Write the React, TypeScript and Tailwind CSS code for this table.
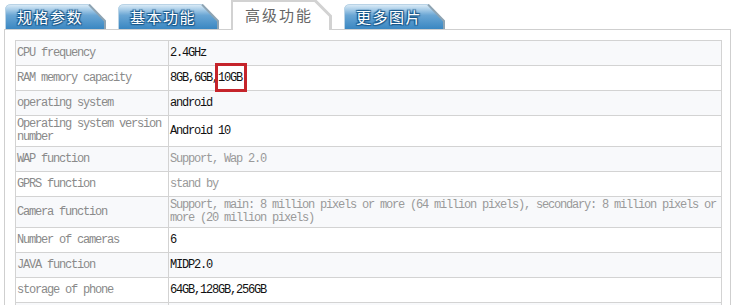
import React from "react";

type Row = {
  label: string;
  value: React.ReactNode;
  muted?: boolean;
};

const rows: Row[] = [
  { label: "CPU frequency", value: "2.4GHz" },
  {
    label: "RAM memory capacity",
    value: (
      <>
        8GB,6GB,
        <span className="relative">
          10GB
          <span className="absolute -top-[8px] -bottom-[7px] -left-[3px] -right-[5px] border-[3px] border-[#c5242b]" />
        </span>
      </>
    ),
  },
  { label: "operating system", value: "android" },
  { label: "Operating system version number", value: "Android 10" },
  { label: "WAP function", value: "Support, Wap 2.0", muted: true },
  { label: "GPRS function", value: "stand by", muted: true },
  {
    label: "Camera function",
    value:
      "Support, main: 8 million pixels or more (64 million pixels), secondary: 8 million pixels or more (20 million pixels)",
    muted: true,
  },
  { label: "Number of cameras", value: "6" },
  { label: "JAVA function", value: "MIDP2.0" },
  { label: "storage of phone", value: "64GB,128GB,256GB" },
  { label: "", value: "" },
];

const BlueTab: React.FC<{ label: string }> = ({ label }) => (
  <div className="relative w-[101px] h-[25px] mb-px flex items-center pl-[12px]">
    <svg className="absolute inset-0" width="101" height="25" viewBox="0 0 101 25">
      <defs>
        <linearGradient id="tabBlue" x1="0" y1="0" x2="0" y2="1">
          <stop offset="0" stopColor="#e3f0f9" />
          <stop offset="0.22" stopColor="#a9cde8" />
          <stop offset="0.45" stopColor="#6aa6d4" />
          <stop offset="1" stopColor="#3a87c2" />
        </linearGradient>
      </defs>
      <path d="M0,25 L0,6 Q0,0 6,0 L84,0 L101,18 L101,25 Z" fill="url(#tabBlue)" />
      <path d="M84,0.5 L100,17 L100,25" fill="none" stroke="#8ea4b3" strokeWidth="2" />
      <path d="M0.5,25 L0.5,6 Q0.5,0.5 6,0.5 L84,0.5" fill="none" stroke="#b9d3e6" strokeWidth="1" />
    </svg>
    <span className="relative text-[15px] leading-none tracking-[1.5px] text-white font-['Noto_Sans_CJK_SC',sans-serif] [text-shadow:0_0_1px_#1c5a8c,1px_1px_1px_#1c5a8c,-1px_-1px_1px_#1c5a8c,1px_-1px_1px_#1c5a8c,-1px_1px_1px_#1c5a8c]">
      {label}
    </span>
  </div>
);

const ActiveTab: React.FC<{ label: string }> = ({ label }) => (
  <div className="relative w-[101px] h-[30px] flex items-center pl-[14px] pb-[1px]">
    <svg className="absolute inset-0" width="101" height="30" viewBox="0 0 101 30">
      <path d="M0,30 L0,0 L84,0 L101,17 L101,30 Z" fill="#ffffff" />
      <path d="M0.5,30 L0.5,0.5 L84,0.5 L99.5,16 L99.5,30" fill="none" stroke="#d2d2d2" strokeWidth="3" />
      <path d="M0.5,30 L0.5,0.5 L84,0.5" fill="none" stroke="#d2d2d2" strokeWidth="1" />
    </svg>
    <span className="relative text-[15px] leading-none tracking-[2px] text-[#666] font-['Noto_Sans_CJK_SC',sans-serif]">
      {label}
    </span>
  </div>
);

const App: React.FC = () => {
  return (
    <div className="w-[734px] h-[305px] overflow-hidden bg-white">
      {/* tabs */}
      <div className="relative z-10 flex items-end gap-[12px] pl-[5px] h-[30px] -mb-px">
        <BlueTab label="规格参数" />
        <BlueTab label="基本功能" />
        <ActiveTab label="高级功能" />
        <BlueTab label="更多图片" />
      </div>

      {/* panel */}
      <div className="ml-[4px] w-[727px] border border-[#cfcfcf] pt-[10px] pl-[10px] pb-4">
        <table className="w-[707px] border-collapse font-['Liberation_Mono','Noto_Sans_CJK_SC',monospace] text-[12px] leading-[13px] tracking-[-1.2px]">
          <tbody>
            {rows.map((row, i) => (
              <tr key={i} className={i % 2 === 0 ? "bg-[#f8f9fb]" : "bg-white"}>
                <td className="w-[153px] h-[25px] border border-[#d3d3d3] pl-[1px] pr-[2px] py-[2px] align-middle text-[#8a8a8a]">
                  {row.label}
                </td>
                <td
                  className={`h-[25px] border border-[#d3d3d3] pl-[1px] pr-[2px] py-[2px] align-middle ${
                    row.muted ? "text-[#9a9a9a]" : "text-[#111]"
                  }`}
                >
                  {row.value}
                </td>
              </tr>
            ))}
          </tbody>
        </table>
      </div>
    </div>
  );
};

export default App;
